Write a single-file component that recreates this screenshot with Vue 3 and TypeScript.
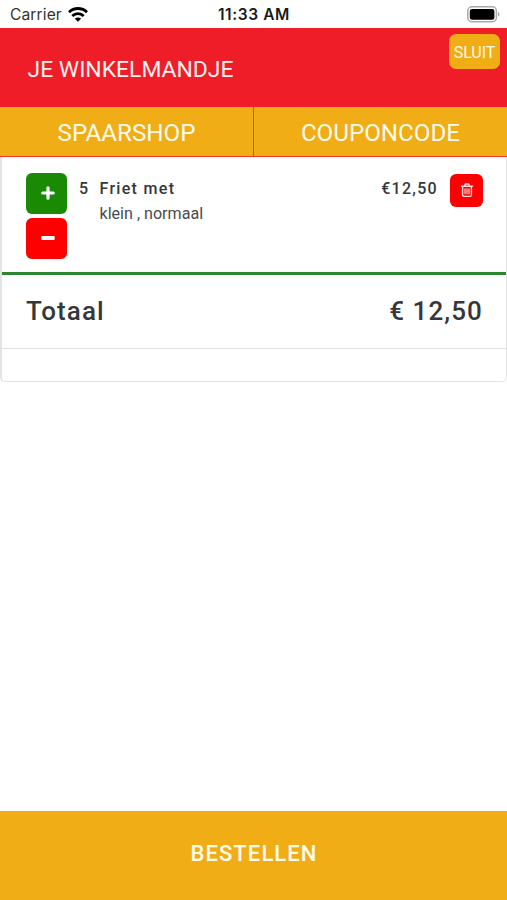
<script setup lang="ts">
interface CartLine {
  id: number
  quantity: number
  name: string
  options: string
  price: string
}

const tabs: string[] = ['SPAARSHOP', 'COUPONCODE']
const lines: CartLine[] = [
  { id: 1, quantity: 5, name: 'Friet met', options: 'klein , normaal', price: '€12,50' },
]
const total = '€ 12,50'
</script>

<template>
  <div class="screen">
    <div class="status">
      <div class="carrier">
        <span>Carrier</span>
        <svg class="wifi" width="20" height="15" viewBox="0 0 20 15" fill="none" stroke="#000" stroke-width="2.8">
          <path d="M1 5.2a12.8 12.8 0 0 1 18 0" />
          <path d="M4.3 8.9a8.1 8.1 0 0 1 11.4 0" />
          <path d="M10 14.8 6.9 11.7a4.4 4.4 0 0 1 6.2 0z" fill="#000" stroke="none" />
        </svg>
      </div>
      <span class="time">11:33 AM</span>
      <svg class="battery" width="33" height="17" viewBox="0 0 33 17">
        <rect x="0.8" y="0.8" width="28.6" height="15" rx="4.2" fill="#fff" stroke="#aaa" stroke-width="1.5" />
        <rect x="2.8" y="2.9" width="24.6" height="10.8" rx="2.2" fill="#000" />
        <path d="M31 6v4.6q1.5-.6 1.5-2.3T31 6z" fill="#aaa" />
      </svg>
    </div>

    <header class="header">
      <h1>JE WINKELMANDJE</h1>
      <button class="close">SLUIT</button>
    </header>

    <nav class="tabs">
      <button v-for="tab in tabs" :key="tab" class="tab">{{ tab }}</button>
    </nav>

    <main class="card">
      <section v-for="line in lines" :key="line.id" class="line">
        <div class="stepper">
          <button class="step plus" aria-label="+">
            <svg width="14" height="14" viewBox="0 0 14 14" stroke="#fff" stroke-width="3.2" stroke-linecap="round">
              <path d="M7 1.8v10.4M1.8 7h10.4" />
            </svg>
          </button>
          <button class="step minus" aria-label="-">
            <svg width="14" height="14" viewBox="0 0 14 14" fill="#fff">
              <rect x="0.3" y="4.9" width="13.4" height="4" rx="1" />
            </svg>
          </button>
        </div>
        <span class="quantity">{{ line.quantity }}</span>
        <div class="product">
          <span class="name">{{ line.name }}</span>
          <span class="options">{{ line.options }}</span>
        </div>
        <span class="price">{{ line.price }}</span>
        <button class="remove">
          <svg width="14" height="16" viewBox="0 0 14 16" fill="none" stroke="#ffdede" stroke-width="1.4" stroke-linecap="round">
            <path d="M1.5 4.3h11M4.4 4 5.4 2h3.2l1 2" />
            <path d="M2.6 4.6v8.4q0 1.4 1.4 1.4h6q1.4 0 1.4-1.4V4.6" />
            <path d="M5 6.8v5M7 6.8v5M9 6.8v5" stroke-width="1.1" />
          </svg>
        </button>
      </section>
      <section class="total">
        <span>Totaal</span>
        <span>{{ total }}</span>
      </section>
      <div class="card-end"></div>
    </main>

    <button class="order">BESTELLEN</button>
  </div>
</template>

<style>
body {
  background: #fff;
}
</style>

<style scoped>
.screen {
  display: flex;
  flex-direction: column;
  height: 900px;
  overflow: hidden;
  font-family: Roboto, "Liberation Sans", sans-serif;
  color: #35373a;
}
.screen * {
  box-sizing: border-box;
}
button {
  border: 0;
  padding: 0;
  margin: 0;
  font-family: inherit;
  color: #fffbed;
}
svg {
  display: block;
}
.status {
  display: grid;
  grid-template-columns: 1fr auto 1fr;
  align-items: center;
  height: 28px;
  flex: none;
  padding: 1px 7px 0 10px;
  font-family: Inter, sans-serif;
  font-size: 15.6px;
  color: #333;
}
.carrier {
  display: flex;
  align-items: center;
  gap: 6px;
  letter-spacing: 0.1px;
}
.wifi {
  margin-top: -1px;
}
.time {
  margin-left: -2px;
  font-size: 15.5px;
  font-weight: 600;
  letter-spacing: 0.6px;
  color: #1a1a1a;
}
.battery {
  justify-self: end;
}
.header {
  display: flex;
  justify-content: space-between;
  align-items: flex-start;
  height: 79px;
  flex: none;
  padding: 6px 7px 0 27.5px;
  background: #ee1d27;
}
h1 {
  margin: 22px 0 0;
  font-size: 22.9px;
  line-height: 28px;
  font-weight: 400;
  color: #fff0f0;
}
.close {
  width: 51px;
  height: 35px;
  padding-top: 1px;
  border-radius: 7px;
  background: #f0ad16;
  font-size: 16px;
}
.tabs {
  display: grid;
  grid-template-columns: 253px 253px;
  gap: 1px;
  height: 50px;
  flex: none;
  padding-bottom: 1px;
  background: #ee3b27;
}
.tab {
  padding-top: 2px;
  background: #f0ad16;
  font-size: 24.2px;
}
.card {
  flex: none;
  height: 225px;
  border: solid #e3e3e3;
  border-width: 0 1px 1px 2px;
  border-radius: 0 0 5px 5px;
}
.line {
  display: flex;
  align-items: flex-start;
  height: 118px;
  padding: 16px 23px 0 24px;
  border-bottom: 3px solid #2b862d;
}
.stepper {
  display: flex;
  flex-direction: column;
  gap: 4px;
}
.step {
  display: flex;
  align-items: center;
  justify-content: center;
  width: 41px;
  height: 41px;
  padding-left: 3px;
  border-radius: 6px;
}
.plus {
  padding-bottom: 2px;
  background: #1a8a05;
}
.minus {
  background: #f00;
  padding-bottom: 2px;
}
.quantity {
  width: 20.5px;
  margin-left: 12px;
}
.quantity,
.name,
.price {
  padding-top: 6px;
  font-size: 16px;
  line-height: 20px;
  font-weight: 500;
  letter-spacing: 1.3px;
}
.product {
  display: flex;
  flex-direction: column;
  flex: 1;
}
.options {
  padding-top: 5px;
  font-size: 16.1px;
  line-height: 20px;
  color: #4a4b4e;
}
.remove {
  display: flex;
  align-items: center;
  justify-content: center;
  width: 33px;
  height: 33px;
  margin: 1px 0 0 12px;
  padding-bottom: 1px;
  border-radius: 6px;
  background: #f00;
}
.total {
  display: flex;
  justify-content: space-between;
  align-items: center;
  height: 74px;
  padding: 0 23px 2px 24px;
  border-bottom: 1px solid #e0e0e0;
  font-size: 26px;
  font-weight: 500;
  letter-spacing: 1.1px;
}
.order {
  flex: none;
  height: 89px;
  margin-top: auto;
  padding: 0 0 4px 1px;
  background: #f0ad16;
  font-size: 22px;
  font-weight: 500;
  letter-spacing: 1.1px;
}
</style>
